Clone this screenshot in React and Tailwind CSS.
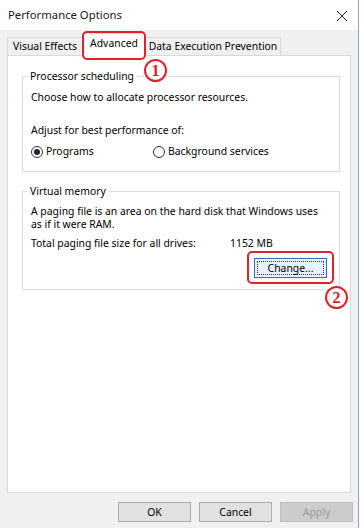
import React from 'react';

const RED = 'border-[#e0232b]';

const Callout = ({ n, className }) => (
	<div
		className={`absolute flex h-[23px] w-[23px] items-center justify-center rounded-full border-2 ${RED} bg-white text-[16px] font-bold leading-none text-[#d8202a] ${className}`}
		style={{ fontFamily: '"Liberation Serif", serif' }}
	>
		{n}
	</div>
);

const Radio = ({ checked, label }) => (
	<label className="flex items-center gap-[3px]">
		<span className="flex h-[12px] w-[12px] items-center justify-center rounded-full border border-[#333] bg-white">
			{checked && <span className="h-[6px] w-[6px] rounded-full bg-[#222]" />}
		</span>
		<span>{label}</span>
	</label>
);

const Group = ({ title, children, className = '' }) => (
	<fieldset className={`border border-[#dcdcdc] pl-[8px] pr-[4px] ${className}`}>
		<legend className="-ml-[4px] px-[3px] leading-[14px]">{title}</legend>
		{children}
	</fieldset>
);

export default function App() {
	return (
		<div
			className="h-[528px] w-[362px] bg-white text-[10.4px] text-black"
			style={{ fontFamily: '"Noto Sans", "Liberation Sans", sans-serif' }}
		>
			<div className="flex h-[528px] w-[359px] flex-col border-r border-[#8da5c4] bg-[#f0f0f0]">
				{/* title bar */}
				<div className="flex h-[30px] items-center justify-between bg-white pl-[8px] pr-[10px]">
					<span className="text-[11.3px] text-[#1a1a1a]">Performance Options</span>
					<svg width="12" height="12" viewBox="0 0 12 12" className="mt-[1px]">
						<path d="M1 1L11 11M11 1L1 11" stroke="#222" strokeWidth="1" />
					</svg>
				</div>

				{/* tabs */}
				<div className="relative z-10 flex h-[25px] items-end pl-[7px]">
					<div className="flex h-[18px] w-[76px] items-center justify-center border border-b-0 border-[#d9d9d9] bg-[#f0f0f0] leading-none">
						Visual Effects
					</div>
					<div className="relative -mb-px flex h-[23px] w-[62px] items-center justify-center border border-b-0 border-[#d9d9d9] bg-white pb-[3px] leading-none">
						Advanced
						<div className={`pointer-events-none absolute -left-[2px] -right-[2px] -top-[3px] bottom-[-4px] rounded-[5px] border-2 ${RED}`} />
						<Callout n="1" className="-right-[23px] top-[25px]" />
					</div>
					<div className="flex h-[18px] w-[136px] items-center justify-center border border-b-0 border-[#d9d9d9] bg-[#f0f0f0] leading-none">
						Data Execution Prevention
					</div>
				</div>

				{/* panel */}
				<div className="mx-[7px] flex h-[438px] flex-col border border-[#d9d9d9] bg-white pl-[14px] pr-[10px] pt-[13px]">
					<Group title="Processor scheduling" className="pb-[12px]">
						<p className="mt-[7px] leading-[14px]">Choose how to allocate processor resources.</p>
						<p className="mt-[19px] leading-[14px]">Adjust for best performance of:</p>
						<div className="mt-[8px] flex h-[14px] items-center">
							<div className="w-[122px]">
								<Radio checked label="Programs" />
							</div>
							<Radio label="Background services" />
						</div>
					</Group>

					<Group title="Virtual memory" className="mt-[12px] pb-[11px]">
						<p className="mt-[7px] pr-[4px] leading-[13px]">
							A paging file is an area on the hard disk that Windows uses as if it were RAM.
						</p>
						<div className="mt-[5px] flex leading-[14px]">
							<span className="w-[199px]">Total paging file size for all drives:</span>
							<span>1152 MB</span>
						</div>
						<div className="mt-[8px] flex justify-end pr-[8px]">
							<div className="relative">
								<button className="flex h-[20px] w-[73px] items-center justify-center border border-[#2a6fb8] bg-[#e5f1fb] p-[2px]">
									<span className="flex h-full w-full items-center justify-center border border-dotted border-[#333] leading-none">
										Change...
									</span>
								</button>
								<div className={`pointer-events-none absolute -bottom-[6px] -left-[7px] -right-[7px] -top-[7px] rounded-[5px] border-2 ${RED}`} />
								<Callout n="2" className="left-[71px] top-[28px]" />
							</div>
						</div>
					</Group>
				</div>

				{/* footer */}
				<div className="flex justify-end gap-[8px] pr-[5px] pt-[9px]">
					<button className="h-[20px] w-[73px] border border-[#adadad] bg-[#e1e1e1] leading-none">OK</button>
					<button className="h-[20px] w-[73px] border border-[#adadad] bg-[#e1e1e1] leading-none">Cancel</button>
					<button className="h-[20px] w-[73px] border border-[#bfbfbf] bg-[#cccccc] leading-none text-[#9a9a9a]">
						Apply
					</button>
				</div>
			</div>
		</div>
	);
}
